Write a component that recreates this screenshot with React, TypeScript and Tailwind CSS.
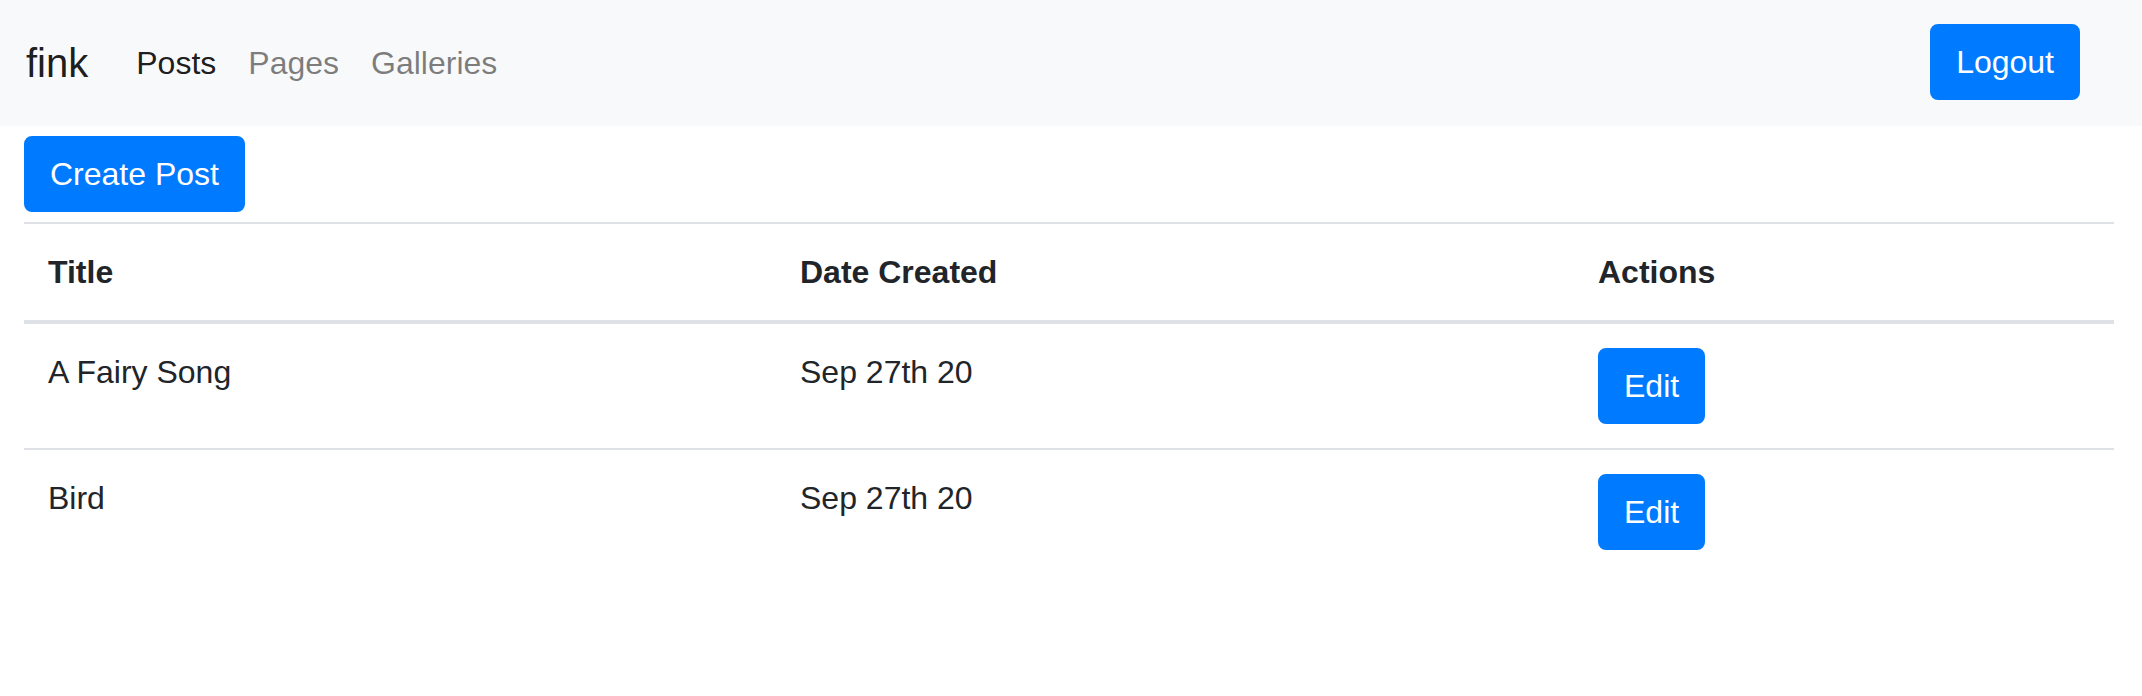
import React from 'react';

type Post = { id: number; title: string; created: string };

const posts: Post[] = [
  { id: 1, title: 'A Fairy Song', created: 'Sep 27th 20' },
  { id: 2, title: 'Bird', created: 'Sep 27th 20' },
];

const btn =
  'inline-block align-top rounded-[8px] border-2 border-[#007bff] bg-[#007bff] px-[24px] py-[12px] text-[32px] leading-[48px] text-white';

const App: React.FC = () => {
  return (
    <div className="min-h-screen bg-white text-[#212529] font-['Liberation_Sans',Arial,sans-serif]">
      <nav className="flex h-[126px] items-center bg-[#f8f9fa] pl-[26px] pr-[62px]">
        <a href="#" className="mr-[32px] text-[40px] leading-[60px] text-black/90">
          fink
        </a>
        <ul className="flex items-center">
          <li>
            <a href="#" className="block px-[16px] text-[32px] leading-[48px] text-black/90">
              Posts
            </a>
          </li>
          <li>
            <a href="#" className="block px-[16px] text-[32px] leading-[48px] text-black/50">
              Pages
            </a>
          </li>
          <li>
            <a href="#" className="block px-[16px] text-[32px] leading-[48px] text-black/50">
              Galleries
            </a>
          </li>
        </ul>
        <button className={`ml-auto mb-[2px] ${btn}`}>Logout</button>
      </nav>

      <main className="pl-[24px] pr-[28px]">
        <button className={`mt-[10px] ${btn}`}>Create Post</button>

        <table className="mt-[10px] w-full border-separate border-spacing-0 text-[32px] leading-[48px]">
          <thead>
            <tr>
              <th className="w-[752px] border-t-2 border-b-4 border-[#dee2e6] p-[24px] text-left font-bold">Title</th>
              <th className="w-[798px] border-t-2 border-b-4 border-[#dee2e6] p-[24px] text-left font-bold">
                Date Created
              </th>
              <th className="border-t-2 border-b-4 border-[#dee2e6] p-[24px] text-left font-bold">Actions</th>
            </tr>
          </thead>
          <tbody>
            {posts.map((post, i) => {
              const cell = `p-[24px] align-top border-[#dee2e6] ${i > 0 ? 'border-t-2' : ''}`;
              return (
                <tr key={post.id}>
                  <td className={cell}>{post.title}</td>
                  <td className={cell}>{post.created}</td>
                  <td className={cell}>
                    <button className={btn}>Edit</button>
                  </td>
                </tr>
              );
            })}
          </tbody>
        </table>
      </main>
    </div>
  );
};

export default App;
